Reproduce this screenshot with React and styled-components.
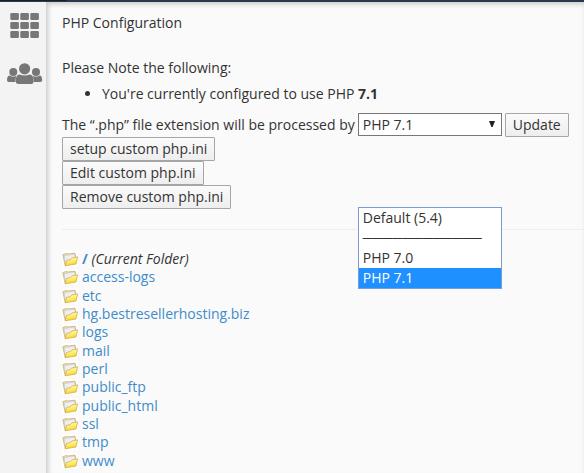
import React, { useState } from "react";
import { createGlobalStyle, styled } from "styled-components";

const versions = [
  { value: "default", label: "Default (5.4)" },
  { value: "none", label: "────────────" },
  { value: "7.0", label: "PHP 7.0" },
  { value: "7.1", label: "PHP 7.1" },
];

const folders = [
  "access-logs",
  "etc",
  "hg.bestresellerhosting.biz",
  "logs",
  "mail",
  "perl",
  "public_ftp",
  "public_html",
  "ssl",
  "tmp",
  "www",
];

const GridIcon = () => (
  <svg width="30" height="26" viewBox="0 0 30 26" fill="#777">
    {[0, 9, 18].map((y) =>
      [0, 10, 20].map((x) => (
        <rect key={`${x}-${y}`} x={x + 0.3} y={y} width="8.6" height="7" rx="1.2" />
      ))
    )}
  </svg>
);

const UsersIcon = () => (
  <svg width="36" height="22" viewBox="0 0 36 22" fill="#777">
    <circle cx="6.3" cy="9" r="4" />
    <circle cx="29" cy="9" r="4" />
    <circle cx="17.6" cy="5.8" r="5.6" />
    <path d="M0 17.2C0 14.2 .9 12.4 2.8 12.4Q6 14.6 9.4 12.7Q8.5 14.6 8.3 19H1.8Q0 19 0 17.2Z" />
    <path d="M35.2 17.2C35.2 14.2 34.3 12.4 32.4 12.4Q29.2 14.6 25.8 12.7Q26.7 14.6 26.9 19H33.4Q35.2 19 35.2 17.2Z" />
    <path d="M8.7 18.6C8.7 14.4 10 11.6 12.6 11.6Q17.6 13.6 22.6 11.6C25.3 11.6 26.7 14.4 26.7 18.6Q26.7 21 24.3 21H11.1Q8.7 21 8.7 18.6Z" />
  </svg>
);

const FolderIcon = () => (
  <svg width="16" height="16" viewBox="0 0 16 16">
    <defs>
      <linearGradient id="flap" x1="0" y1="0" x2="0.3" y2="1">
        <stop offset="0" stopColor="#fffbd8" />
        <stop offset="0.5" stopColor="#fff17a" />
        <stop offset="1" stopColor="#f8d42c" />
      </linearGradient>
    </defs>
    <rect width="16" height="16" fill="#fff" />
    <path d="M.8 3.6L4.6 2.4L5.8 3L13 2.2L13.8 6L3.2 14.6Z" fill="#ecdcae" stroke="#c2a56a" strokeWidth=".7" />
    <path d="M2.2 4.8L12.2 3L13.4 6.6L3.4 12Z" fill="#efeff3" stroke="#c2c2c6" strokeWidth=".5" />
    <path d="M3.2 14.8L4.6 9.4L8.4 8.6L9.8 7L15.6 5.8L14 13Z" fill="url(#flap)" stroke="#cda43f" strokeWidth=".7" strokeLinejoin="round" />
  </svg>
);

const App = () => {
  const [version, setVersion] = useState("7.1");

  const handleVersion = (event) => {
    setVersion(event.target.value);
  };

  return (
    <>
      <GlobalStyle />
      <TopBar>
        <Brand />
      </TopBar>
      <Layout>
        <Sidebar>
          <SideLink href="#home" aria-label="Home">
            <GridIcon />
          </SideLink>
          <SideLink href="#users" aria-label="Users">
            <UsersIcon />
          </SideLink>
        </Sidebar>
        <Content>
          <Title>PHP Configuration</Title>
          <Text>Please Note the following:</Text>
          <Notes>
            <li>
              You're currently configured to use PHP <b>7.1</b>
            </li>
          </Notes>
          <VersionRow>
            <label htmlFor="version">
              The “.php” file extension will be processed by
            </label>
            <SelectBox>
              <Select id="version" value={version} onChange={handleVersion}>
                {versions.map((item) => (
                  <option key={item.value} value={item.value}>
                    {item.label}
                  </option>
                ))}
              </Select>
              <Arrow viewBox="0 0 6 6">
                <path d="M0 0H6L3.6 6H2.4Z" fill="#222" />
              </Arrow>
              <Menu role="listbox" aria-label="PHP version">
                {versions.map((item) => (
                  <MenuItem
                    key={item.value}
                    role="option"
                    aria-selected={item.value === version}
                    $active={item.value === version}
                    onClick={() => setVersion(item.value)}
                  >
                    {item.label}
                  </MenuItem>
                ))}
              </Menu>
            </SelectBox>
            <Button>Update</Button>
          </VersionRow>
          <ButtonList>
            <Button>setup custom php.ini</Button>
            <Button>Edit custom php.ini</Button>
            <Button>Remove custom php.ini</Button>
          </ButtonList>
          <Divider />
          <FolderList>
            <Folder>
              <FolderIcon />
              <span>
                <a href="#root">
                  <b>/</b>
                </a>{" "}
                <i>(Current Folder)</i>
              </span>
            </Folder>
            {folders.map((name) => (
              <Folder key={name}>
                <FolderIcon />
                <a href={`#${name}`}>{name}</a>
              </Folder>
            ))}
          </FolderList>
        </Content>
      </Layout>
    </>
  );
};

export default App;

const GlobalStyle = createGlobalStyle`
  * {
    box-sizing: border-box;
  }

  body {
    margin: 0;
    overflow: hidden;
    background-color: #fafafa;
    color: #333;
    font-family: "Open Sans", sans-serif;
    font-size: 14px;
    line-height: 20px;
  }

  a {
    color: #428bca;
    text-decoration: none;
  }
`;

const TopBar = styled.header`
  height: 2px;
  background-color: #293a4a;
`;

const Brand = styled.div`
  width: 67px;
  height: 1px;
  background-color: #17212b;
`;

const Layout = styled.div`
  display: flex;
  min-height: 100vh;
`;

const Sidebar = styled.nav`
  display: flex;
  flex-direction: column;
  align-items: center;
  gap: 24px;
  flex: none;
  width: 46px;
  padding: 11px 0 0 3px;
  background-color: #f3f3f3;
`;

const SideLink = styled.a`
  display: flex;
`;

const Content = styled.main`
  flex: 1;
  min-width: 0;
  padding: 11px 0 0 16px;
  box-shadow: inset 2px 2px 5px rgba(0, 0, 0, 0.2);
`;

const Title = styled.h1`
  margin: 0 0 25px;
  font-size: 14px;
  font-weight: 400;
`;

const Text = styled.p`
  margin: 0;
`;

const Notes = styled.ul`
  margin: 6px 0 9px;
  padding-left: 40px;
`;

const VersionRow = styled.div`
  display: flex;
  align-items: flex-start;
  gap: 3px;
  line-height: 24px;
  white-space: nowrap;
`;

const SelectBox = styled.div`
  position: relative;
  width: 144px;
`;

const Select = styled.select`
  display: block;
  width: 100%;
  height: 23px;
  padding: 0 4px;
  border: 1px solid #777;
  border-radius: 0;
  appearance: none;
  background-color: #fff;
  color: #333;
  font: inherit;
  line-height: 20px;
`;

const Arrow = styled.svg`
  position: absolute;
  top: 8px;
  right: 7px;
  width: 6px;
  height: 6px;
  pointer-events: none;
`;

const Menu = styled.ul`
  position: absolute;
  top: 94px;
  left: 0;
  width: 100%;
  margin: 0;
  padding: 0;
  border: 1px solid #7a9bd3;
  background-color: #fff;
  line-height: 20px;
  list-style: none;
`;

const MenuItem = styled.li`
  height: 20px;
  padding: 0 4px;
  background-color: ${(props) => (props.$active ? "#1e90ff" : "transparent")};
  color: ${(props) => (props.$active ? "#fff" : "#333")};
`;

const Button = styled.button`
  height: 24px;
  padding: 0 7px;
  border: 1px solid #a6a6a6;
  border-radius: 1px;
  background: linear-gradient(#fbfbfb, #eee);
  color: #333;
  font: inherit;
  line-height: 20px;
`;

const ButtonList = styled.div`
  display: flex;
  flex-direction: column;
  align-items: flex-start;
`;

const Divider = styled.hr`
  margin: 20px 0;
  border: 0;
  border-top: 1px solid #eee;
`;

const FolderList = styled.ul`
  display: grid;
  min-height: 220px;
  margin: 0;
  padding: 0;
  line-height: 18px;
  list-style: none;
`;

const Folder = styled.li`
  display: flex;
  align-items: center;
  gap: 4px;
`;
